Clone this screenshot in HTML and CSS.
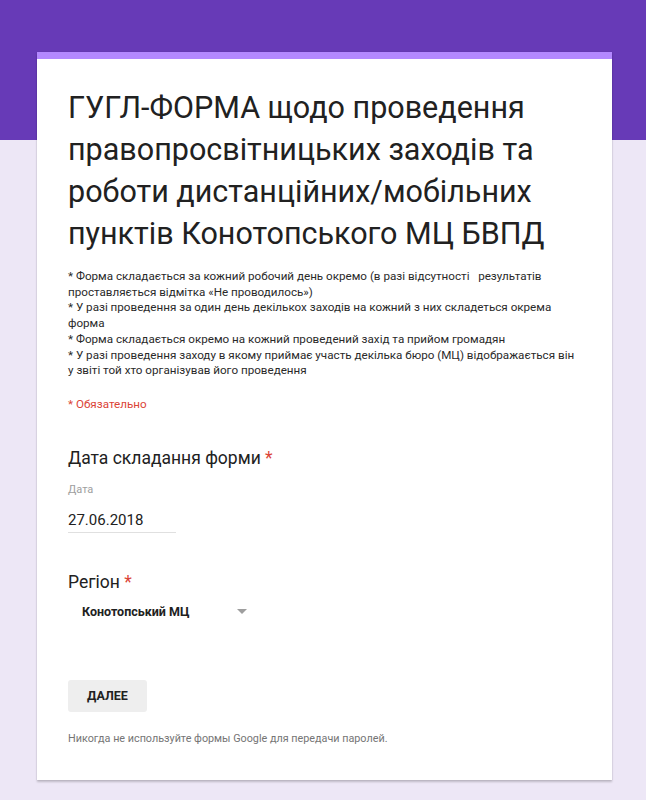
FILE: index.html
```html
<!DOCTYPE html>
<html lang="uk">
<head>
  <meta charset="UTF-8" />
  <meta name="viewport" content="width=device-width, initial-scale=1" />
  <title>ГУГЛ-ФОРМА Конотопського МЦ БВПД</title>
  <link rel="stylesheet" href="styles.css">
</head>
<body>

<div class="shapka"></div>

<main class="forma">
  <div class="smuga"></div>

  <div class="vstup">
    <h1 class="zagolovok">ГУГЛ-ФОРМА щодо проведення правопросвітницьких заходів та роботи дистанційних/мобільних пунктів Конотопського МЦ БВПД</h1>
    <div class="opys">* Форма складається за кожний робочий день окремо (в разі відсутності   результатів проставляється відмітка «Не проводилось»)
* У разі проведення за один день декількох заходів на кожний з них складеться окрема форма
* Форма складається окремо на кожний проведений захід та прийом громадян
* У разі проведення заходу в якому приймає участь декілька бюро (МЦ) відображається він у звіті той хто організував його проведення</div>
    <div class="obovyazkovo">* Обязательно</div>
  </div>

  <div class="pytannya pytannya-data">
    <div class="nazva">Дата складання форми <span class="zirka">*</span></div>
    <label class="pidpys" for="data">Дата</label>
    <input class="pole-daty" id="data" type="text" value="27.06.2018" />
  </div>

  <div class="pytannya pytannya-region">
    <div class="nazva">Регіон <span class="zirka">*</span></div>
    <div class="spysok">
      <span class="vybrane">Конотопський МЦ</span>
      <span class="strilka"></span>
    </div>
  </div>

  <div class="dii">
    <button class="knopka">ДАЛЕЕ</button>
  </div>

  <p class="prymitka">Никогда не используйте формы Google для передачи паролей.</p>
</main>

</body>
</html>
```

FILE: styles.css
```css
body {
  margin: 0; font-family: Roboto, "Noto Sans", sans-serif; color: #212121;
  background: #ede7f6; min-height: 800px; position: relative;
}
.shapka {
  background: #673ab7; height: 140px;
  position: absolute; top: 0; left: 0; right: 0;
}
.forma {
  position: relative; margin: 52px 0 0 37px; width: 575px;
  background: white; box-shadow: 0 2px 2px rgba(0,0,0,0.2), 0 0 1px rgba(0,0,0,0.15);
  padding-bottom: 34px;
}
.smuga { height: 7px; background: #b388ff; }
.vstup { padding: 28px 32px 0 31px; }
.zagolovok {
  margin: 0; font-weight: 400; font-size: 30.5px; line-height: 42px; color: #212121;
}
.opys {
  margin-top: 14px; font-size: 11.65px; line-height: 15.7px; color: #2a2a2a;
  white-space: pre-wrap;
}
.obovyazkovo {
  margin-top: 17px; font-size: 11.65px; line-height: 16px; color: #db4437;
}
/* Питання */
.pytannya { padding: 0 30px 0 31px; }
.pytannya-data { margin-top: 34px; }
.pytannya-region { margin-top: 37px; }
.nazva { font-size: 17.5px; line-height: 24px; color: #212121; }
.zirka { color: #db4437; }
.pidpys {
  display: block; margin-top: 13px; font-size: 11px; line-height: 14px; color: #9e9e9e;
}
.pole-daty {
  display: block; margin-top: 13px; width: 108px; padding: 0 0 2px 0;
  border: none; border-bottom: 1px solid #e0e0e0; outline: none;
  font-family: inherit; font-size: 15px; line-height: 20px; color: #212121;
}
.spysok {
  display: flex; align-items: center; margin-top: 4px; padding-left: 14px; height: 28px;
}
.vybrane { font-size: 12.5px; font-weight: 700; color: #212121; width: 155px; }
.strilka {
  width: 0; height: 0; border-left: 5px solid transparent; border-right: 5px solid transparent;
  border-top: 5px solid #9e9e9e;
}
/* Кнопка і примітка */
.dii { padding: 0 31px; margin-top: 54px; }
.knopka {
  display: block; background: #eeeeee; border: none; border-radius: 3px; width: 79px; height: 32px;
  font-family: inherit; font-size: 12.5px; font-weight: 700; color: #212121; cursor: pointer;
}
.prymitka {
  margin: 20px 31px 0; font-size: 10.8px; line-height: 14px; color: #757575;
}
```
